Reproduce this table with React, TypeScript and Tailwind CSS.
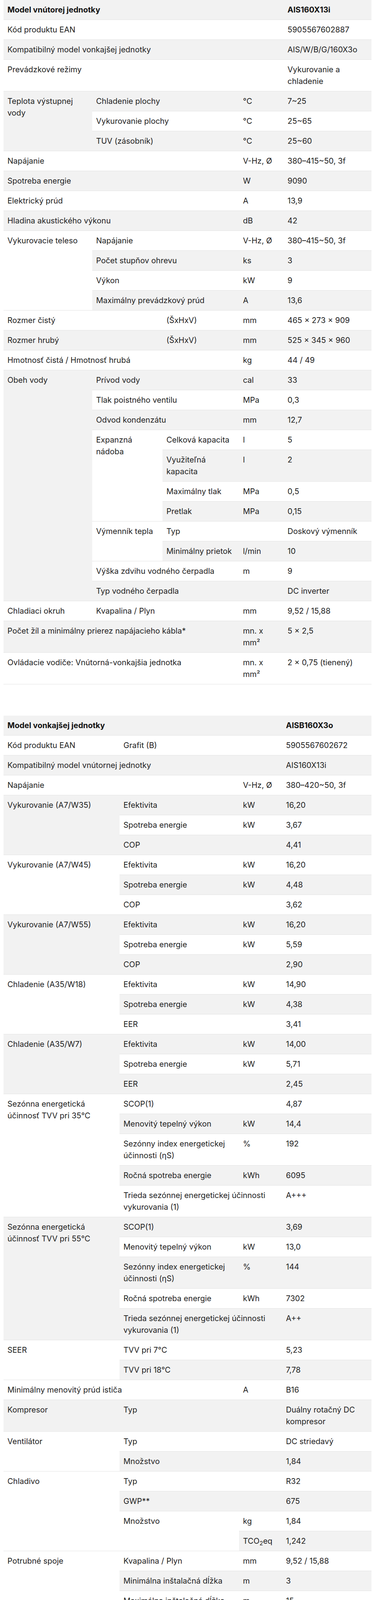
import React from "react";

type Cell = { t: React.ReactNode; c?: number; r?: number; b?: boolean };

const mm2 = (
  <>
    mn. x<br />
    mm²
  </>
);

const indoor: Cell[][] = [
  [{ t: "Model vnútorej jednotky", c: 4, b: true }, { t: "AIS160X13i", b: true }],
  [{ t: "Kód produktu EAN", c: 4 }, { t: "5905567602887" }],
  [{ t: "Kompatibilný model vonkajšej jednotky", c: 4 }, { t: "AIS/W/B/G/160X3o" }],
  [
    { t: "Prevádzkové režimy", c: 4 },
    {
      t: (
        <>
          Vykurovanie a<br />
          chladenie
        </>
      ),
    },
  ],
  [
    {
      t: (
        <>
          Teplota výstupnej
          <br />
          vody
        </>
      ),
      r: 3,
    },
    { t: "Chladenie plochy", c: 2 },
    { t: "°C" },
    { t: "7~25" },
  ],
  [{ t: "Vykurovanie plochy", c: 2 }, { t: "°C" }, { t: "25~65" }],
  [{ t: "TUV (zásobník)", c: 2 }, { t: "°C" }, { t: "25~60" }],
  [{ t: "Napájanie", c: 3 }, { t: "V-Hz, Ø" }, { t: "380–415~50, 3f" }],
  [{ t: "Spotreba energie", c: 3 }, { t: "W" }, { t: "9090" }],
  [{ t: "Elektrický prúd", c: 3 }, { t: "A" }, { t: "13,9" }],
  [{ t: "Hladina akustického výkonu", c: 3 }, { t: "dB" }, { t: "42" }],
  [
    { t: "Vykurovacie teleso", r: 4 },
    { t: "Napájanie", c: 2 },
    { t: "V-Hz, Ø" },
    { t: "380–415~50, 3f" },
  ],
  [{ t: "Počet stupňov ohrevu", c: 2 }, { t: "ks" }, { t: "3" }],
  [{ t: "Výkon", c: 2 }, { t: "kW" }, { t: "9" }],
  [{ t: "Maximálny prevádzkový prúd", c: 2 }, { t: "A" }, { t: "13,6" }],
  [{ t: "Rozmer čistý", c: 2 }, { t: "(ŠxHxV)" }, { t: "mm" }, { t: "465 x 273 x 909" }],
  [{ t: "Rozmer hrubý", c: 2 }, { t: "(ŠxHxV)" }, { t: "mm" }, { t: "525 x 345 x 960" }],
  [{ t: "Hmotnosť čistá / Hmotnosť hrubá", c: 3 }, { t: "kg" }, { t: "44 / 49" }],
  [{ t: "Obeh vody", r: 11 }, { t: "Prívod vody", c: 2 }, { t: "cal" }, { t: "33" }],
  [{ t: "Tlak poistného ventilu", c: 2 }, { t: "MPa" }, { t: "0,3" }],
  [{ t: "Odvod kondenzátu", c: 2 }, { t: "mm" }, { t: "12,7" }],
  [
    {
      t: (
        <>
          Expanzná
          <br />
          nádoba
        </>
      ),
      r: 4,
    },
    { t: "Celková kapacita" },
    { t: "l" },
    { t: "5" },
  ],
  [
    {
      t: (
        <>
          Využiteľná
          <br />
          kapacita
        </>
      ),
    },
    { t: "l" },
    { t: "2" },
  ],
  [{ t: "Maximálny tlak" }, { t: "MPa" }, { t: "0,5" }],
  [{ t: "Pretlak" }, { t: "MPa" }, { t: "0,15" }],
  [{ t: "Výmenník tepla", r: 2 }, { t: "Typ" }, { t: "" }, { t: "Doskový výmenník" }],
  [{ t: "Minimálny prietok" }, { t: "l/min" }, { t: "10" }],
  [{ t: "Výška zdvihu vodného čerpadla", c: 2 }, { t: "m" }, { t: "9" }],
  [{ t: "Typ vodného čerpadla", c: 2 }, { t: "" }, { t: "DC inverter" }],
  [{ t: "Chladiaci okruh" }, { t: "Kvapalina / Plyn", c: 2 }, { t: "mm" }, { t: "9,52 / 15,88" }],
  [{ t: "Počet žíl a minimálny prierez napájacieho kábla*", c: 3 }, { t: mm2 }, { t: "5 x 2,5" }],
  [
    { t: "Ovládacie vodiče: Vnútorná-vonkajšia jednotka", c: 3 },
    { t: mm2 },
    { t: "2 x 0,75 (tienený)" },
  ],
];

const seasonal = (temp: string, scop: string, power: string, idx: string, year: string, cls: string): Cell[][] => [
  [
    {
      t: (
        <>
          Sezónna energetická
          <br />
          účinnosť TVV pri {temp}
        </>
      ),
      r: 5,
    },
    { t: "SCOP(1)" },
    { t: "" },
    { t: scop },
  ],
  [{ t: "Menovitý tepelný výkon" }, { t: "kW" }, { t: power }],
  [
    {
      t: (
        <>
          Sezónny index energetickej
          <br />
          účinnosti (ηS)
        </>
      ),
    },
    { t: "%" },
    { t: idx },
  ],
  [{ t: "Ročná spotreba energie" }, { t: "kWh" }, { t: year }],
  [
    {
      t: (
        <>
          Trieda sezónnej energetickej účinnosti
          <br />
          vykurovania (1)
        </>
      ),
      c: 2,
    },
    { t: cls },
  ],
];

const perf = (label: string, eff: string, cons: string, ratioName: string, ratio: string): Cell[][] => [
  [{ t: label, r: 3 }, { t: "Efektivita" }, { t: "kW" }, { t: eff }],
  [{ t: "Spotreba energie" }, { t: "kW" }, { t: cons }],
  [{ t: ratioName }, { t: "" }, { t: ratio }],
];

const outdoor: Cell[][] = [
  [{ t: "Model vonkajšej jednotky", c: 3, b: true }, { t: "AISB160X3o", b: true }],
  [{ t: "Kód produktu EAN" }, { t: "Grafit (B)" }, { t: "" }, { t: "5905567602672" }],
  [{ t: "Kompatibilný model vnútornej jednotky", c: 3 }, { t: "AIS160X13i" }],
  [{ t: "Napájanie", c: 2 }, { t: "V-Hz, Ø" }, { t: "380–420~50, 3f" }],
  ...perf("Vykurovanie (A7/W35)", "16,20", "3,67", "COP", "4,41"),
  ...perf("Vykurovanie (A7/W45)", "16,20", "4,48", "COP", "3,62"),
  ...perf("Vykurovanie (A7/W55)", "16,20", "5,59", "COP", "2,90"),
  ...perf("Chladenie (A35/W18)", "14,90", "4,38", "EER", "3,41"),
  ...perf("Chladenie (A35/W7)", "14,00", "5,71", "EER", "2,45"),
  ...seasonal("35°C", "4,87", "14,4", "192", "6095", "A+++"),
  ...seasonal("55°C", "3,69", "13,0", "144", "7302", "A++"),
  [{ t: "SEER", r: 2 }, { t: "TVV pri 7°C" }, { t: "" }, { t: "5,23" }],
  [{ t: "TVV pri 18°C" }, { t: "" }, { t: "7,78" }],
  [{ t: "Minimálny menovitý prúd ističa", c: 2 }, { t: "A" }, { t: "B16" }],
  [
    { t: "Kompresor" },
    { t: "Typ" },
    { t: "" },
    {
      t: (
        <>
          Duálny rotačný DC
          <br />
          kompresor
        </>
      ),
    },
  ],
  [{ t: "Ventilátor", r: 2 }, { t: "Typ" }, { t: "" }, { t: "DC striedavý" }],
  [{ t: "Množstvo" }, { t: "" }, { t: "1,84" }],
  [{ t: "Chladivo", r: 4 }, { t: "Typ" }, { t: "" }, { t: "R32" }],
  [{ t: "GWP**" }, { t: "" }, { t: "675" }],
  [{ t: "Množstvo", r: 2 }, { t: "kg" }, { t: "1,84" }],
  [
    {
      t: (
        <>
          TCO<sub>2</sub>eq
        </>
      ),
    },
    { t: "1,242" },
  ],
  [{ t: "Potrubné spoje", r: 4 }, { t: "Kvapalina / Plyn" }, { t: "mm" }, { t: "9,52 / 15,88" }],
  [{ t: "Minimálna inštalačná dĺžka" }, { t: "m" }, { t: "3" }],
  [{ t: "Maximálna inštalačná dĺžka" }, { t: "m" }, { t: "15" }],
  [
    {
      t: (
        <>
          Dodatočné množstvo
          <br />
          chladiva nad 7,5 mb
        </>
      ),
    },
    { t: "g/m" },
    { t: "38" },
  ],
  [
    { t: "Maximálny rozdiel úrovní", r: 2 },
    {
      t: (
        <>
          Vonkajšia jednotka nad
          <br />
          vnútornou jednotkou
        </>
      ),
    },
    { t: "m" },
    { t: "8" },
  ],
  [
    {
      t: (
        <>
          Vonkajšia jednotka pod
          <br />
          vnútornou jednotkou
        </>
      ),
    },
    { t: "m" },
    { t: "8" },
  ],
  [{ t: "Počet žíl a minimálny prierez napájacieho kábla*", c: 2 }, { t: mm2 }, { t: "5 x 2,5" }],
  [
    { t: "Ovládacie vodiče: Vnútorná-vonkajšia jednotka", c: 2 },
    { t: mm2 },
    { t: "2 x 0,75 (tienený)" },
  ],
  [{ t: "Rozteč držiakov" }, { t: "(ŠxH)" }, { t: "mm" }, { t: "654 x 493" }],
  [{ t: "Hladina akustického tlaku", c: 2 }, { t: "dB(A)" }, { t: "54" }],
  [{ t: "Hladina akustického výkonu", c: 2 }, { t: "dB(A)" }, { t: "68" }],
  [{ t: "Rozmer čistý" }, { t: "(ŠxHxV)" }, { t: "mm" }, { t: "1099 x 436 x 854" }],
  [{ t: "Rozmer hrubý" }, { t: "(ŠxHxV)" }, { t: "mm" }, { t: "1165 x 495 x 1040" }],
  [{ t: "Hmotnosť čistá / Hmotnosť hrubá", c: 2 }, { t: "kg" }, { t: "108 / 123" }],
  [
    { t: "Vonkajší prevádzkový rozsah", r: 2 },
    { t: "Chladenie / Vykurovanie" },
    { t: "°C" },
    { t: "-5~43 / -25~35" },
  ],
  [{ t: "TUV" }, { t: "°C" }, { t: "-25~43" }],
];

const SpecTable = ({ rows, cols }: { rows: Cell[][]; cols: number[] }) => (
  <table className="w-full table-fixed border-collapse">
    <colgroup>
      {cols.map((w, i) => (
        <col key={i} style={{ width: w }} />
      ))}
      <col />
    </colgroup>
    <tbody>
      {rows.map((row, i) => (
        <tr key={i}>
          {row.map((cell, j) => (
            <td
              key={j}
              colSpan={cell.c}
              rowSpan={cell.r}
              className={`align-top px-[10px] py-[10px] border-b border-[#e3e3e3] whitespace-nowrap ${
                i % 2 === 0 ? "bg-[#f2f2f2]" : "bg-white"
              } ${cell.b ? "font-bold text-[#111]" : ""}`}
            >
              {cell.t}
            </td>
          ))}
        </tr>
      ))}
    </tbody>
  </table>
);

export default function App() {
  return (
    <div className="bg-white px-[9px] font-['Inter',sans-serif] text-[20px] leading-[30px] text-[#222]">
      <SpecTable rows={indoor} cols={[227, 180, 196, 114]} />
      <div className="h-[80px]" />
      <SpecTable rows={outdoor} cols={[297, 306, 110]} />
    </div>
  );
}
